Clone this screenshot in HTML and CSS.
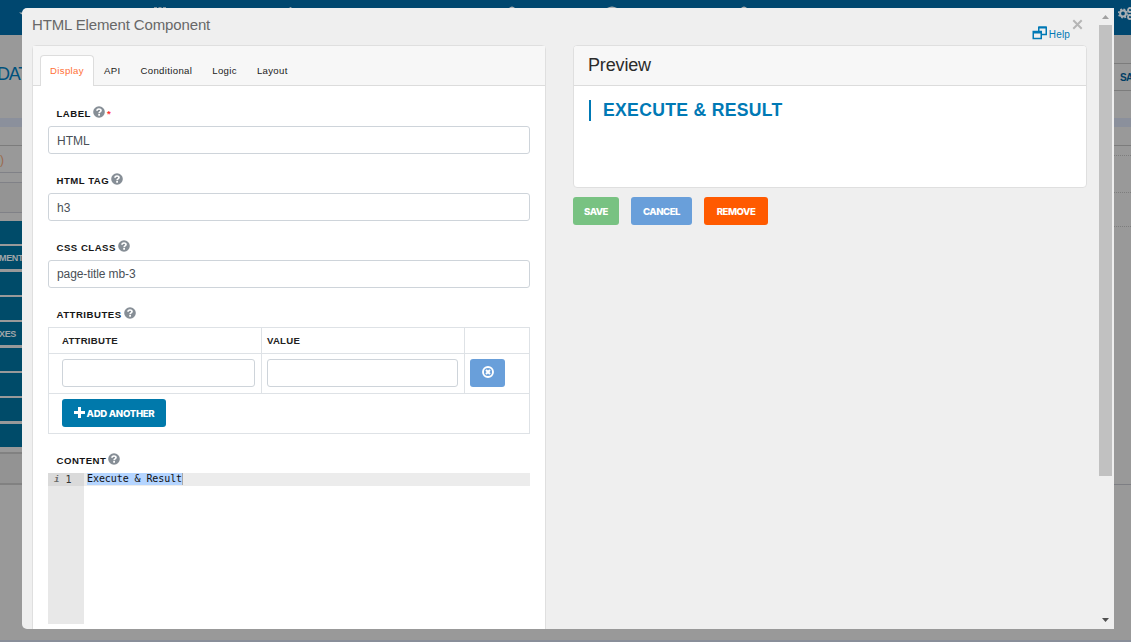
FILE: index.html
```html
<!DOCTYPE html>
<html lang="en">
<head>
<meta charset="utf-8">
<title>HTML Element Component</title>
<link rel="stylesheet" href="styles.css">
</head>
<body>
<svg class="defs" width="0" height="0" aria-hidden="true">
  <symbol id="help" viewBox="0 0 12 12"><circle cx="6" cy="6" r="5.8" fill="#868e96"/><path d="M4 4.7C4 2.5 8 2.4 8 4.6 8 5.9 6.1 5.8 6.1 7.2" fill="none" stroke="#fff" stroke-width="1.7"/><rect x="5.2" y="8" width="1.8" height="1.7" fill="#fff"/></symbol>
</svg>
<div class="page">
  <header class="topbar">
    <svg width="1131" height="35" fill="#a9afb3"><path d="M19 12.500h6v4z"/><path d="M154 7.300h3v1h-3zM158.500 7.300h3v1h-3zM163 7.300h3v1h-3zM289 8l1.500-1 1.500 1zM509 8q3-3 6 0zM607 8q5-3 10 0zM741 8q3-3 6 0z"/><g fill="none" stroke="#a9afb3"><circle cx="1123" cy="13.500" r="2.900" stroke-width="2"/><circle cx="1123" cy="13.500" r="4.300" stroke-width="1.500" stroke-dasharray="1.800 1.580"/><circle cx="1130" cy="10" r="2" stroke-width="1.800"/><circle cx="1130" cy="17" r="2" stroke-width="1.800"/></g></svg>
  </header>
  <div class="under">
    <aside class="side">
      <div class="crumb">DAT</div>
      <div class="band"></div>
      <div class="gap"></div>
      <div class="tabline"><span>)</span></div>
      <div class="search"></div>
      <div class="tiles">
        <b></b><b>MENT</b><b></b><b></b><b>XES</b><b></b><b></b><b></b><b></b>
      </div>
      <div class="group"></div>
    </aside>
    <aside class="right">
      <div class="r1"></div>
      <div class="save">SA</div>
      <div class="r2"></div>
      <div class="band"></div>
      <div class="gap"></div>
      <div class="dots d1"></div><div class="dots d2"></div><div class="dots d3"></div>
      <div class="rest"></div>
    </aside>
  </div>
  <div class="base"></div>
</div>

<main class="modal">
  <div class="content">
    <div class="head">
      <h1>HTML Element Component</h1>
      <div class="actions">
        <a class="help"><svg width="16" height="14" viewBox="0 0 16 14" fill="none" stroke="#0079b5" stroke-width="1.500"><path d="M6.750 5V1.250h7.500v7.250H10"/><path d="M6.750 1.500h7.500" stroke-width="2"/><rect x="1.250" y="5.500" width="8" height="7"/><path d="M1 6.200h8.500" stroke-width="2.500"/></svg><span>Help</span></a>
        <svg class="close" width="11" height="11" viewBox="0 0 11 11"><path d="M1.300 1.300 9.700 9.700M9.700 1.300 1.300 9.700" stroke="#b5b5b5" stroke-width="2"/></svg>
      </div>
    </div>
    <div class="columns">
      <section class="card editor">
        <nav class="tabs"><a class="active">Display</a><a>API</a><a>Conditional</a><a>Logic</a><a>Layout</a></nav>
        <div class="form">
          <div class="field"><label><span>LABEL</span><svg><use href="#help"/></svg><i>*</i></label><div class="input">HTML</div></div>
          <div class="field"><label><span>HTML TAG</span><svg><use href="#help"/></svg></label><div class="input">h3</div></div>
          <div class="field"><label><span>CSS CLASS</span><svg><use href="#help"/></svg></label><div class="input css">page-title mb-3</div></div>
          <div class="field attrs"><label><span>ATTRIBUTES</span><svg><use href="#help"/></svg></label>
            <div class="grid">
              <div class="th first">ATTRIBUTE</div><div class="th">VALUE</div><div class="th"></div>
              <div class="td first"><div class="input"></div></div><div class="td"><div class="input"></div></div>
              <div class="td"><button class="btn blue icon"><svg width="12" height="12" viewBox="0 0 12 12" fill="none" stroke="#fff"><circle cx="6" cy="6" r="5" stroke-width="1.900"/><path d="m4 4 4 4m0-4-4 4" stroke-width="2"/></svg></button></div>
              <div class="foot"><button class="btn add"><svg width="11" height="11" viewBox="0 0 11 11"><path d="M5.500 0v11M0 5.500h11" stroke="#fff" stroke-width="3"/></svg><span>ADD ANOTHER</span></button></div>
            </div>
          </div>
          <div class="field"><label><span>CONTENT</span><svg><use href="#help"/></svg></label>
            <div class="code"><div class="gutter"><div><em>i</em><span>1</span></div></div><div class="line"><mark>Execute &amp; Result</mark></div></div>
          </div>
        </div>
      </section>
      <div class="aside">
        <section class="card preview">
          <h2>Preview</h2>
          <div class="body"><h3>EXECUTE &amp; RESULT</h3></div>
        </section>
        <div class="buttons"><button class="btn green">SAVE</button><button class="btn blue cancel">CANCEL</button><button class="btn red">REMOVE</button></div>
      </div>
    </div>
  </div>
  <div class="scroll"><svg width="15" height="17"><path d="M3 11h7L6.500 7z" fill="#a0a0a0"/></svg><div class="thumb"></div><svg class="down" width="15" height="17"><path d="M3 6h7L6.500 10z" fill="#505050"/></svg></div>
</main>
</body>
</html>
```
FILE: styles.css
```css
* { box-sizing: border-box; }
body { margin: 0; font-family: "Liberation Sans", Arial, sans-serif; overflow: hidden; }
h1, h2, h3 { margin: 0; font-weight: 400; }
svg { display: block; flex: none; }
.defs { position: absolute; }
.page { height: 642px; background: #999; display: flex; flex-direction: column; overflow: hidden; }
.topbar { height: 35px; background: #00476f; flex: none; }
.under { flex: 1; display: flex; justify-content: space-between; }
.base { height: 2px; background: #898e99; }
.side { width: 22px; overflow: hidden; }
.crumb { height: 83px; padding-top: 26px; margin-left: -3px; font: 18px/26px "Liberation Sans", sans-serif; color: #00517c; letter-spacing: -1.2px; white-space: nowrap; }
.band { height: 9px; background: #8b909c; }
.gap { height: 19px; border-bottom: 1px solid #7c7c7c; }
.tabline { height: 27px; border-bottom: 1px solid #808187; font: 12px/28px "Liberation Sans", sans-serif; color: #9b6a4c; }
.search { margin-top: 9px; border: solid #808187; border-width: 1px 0; height: 31px; background: #949494; }
.tiles { padding-top: 8px; display: grid; gap: 2.350px; }
.tiles b { height: 23px; background: #004b69; color: #a0a5a8; font: bold 9px/24px "Liberation Sans", sans-serif; letter-spacing: -.35px; margin-left: -2px; padding-left: 1px; }
.group { margin-top: 5px; height: 33px; border: solid #818181; border-width: 2px 0; background: #939393; }
.right { width: 17px; overflow: hidden; }
.r1 { height: 29px; border-bottom: 1px solid #7c7c7c; }
.save { height: 27px; border-bottom: 1px solid #7c7c7c; padding-left: 6px; font: bold 10px/28px "Liberation Sans", sans-serif; letter-spacing: -.6px; color: #003e65; }
.r2 { height: 27px; }
.dots { border-bottom: 1px dotted #7d7d7d; }
.d1 { height: 10px; }
.d2 { height: 37px; }
.d3 { height: 34px; }
.rest { height: 258px; border-bottom: 1px solid #7d7e83; }

.modal { position: absolute; left: 22px; top: 8px; width: 1092px; height: 621px; background: #efefef; border-radius: 5px 0 0 5px; display: flex; overflow: hidden; }
.content { width: 1077px; padding-left: 10px; }
.head { height: 37px; display: flex; justify-content: space-between; }
h1 { font-size: 15px; line-height: 34px; color: #686868; letter-spacing: -.14px; }
.actions { display: flex; gap: 2px; padding: 11px 16px 0 0; }
.help { display: flex; gap: 1px; padding-top: 7px; color: #0079b5; font-size: 10px; line-height: 17px; letter-spacing: .15px; }
.columns { display: flex; gap: 27px; }
.card { width: 514px; background: #fff; border: 1px solid #dfdfdf; border-radius: 4px; }
.editor { height: 610px; flex: none; }
.tabs { height: 40px; background: #f7f7f7; border-bottom: 1px solid #dcdcdc; padding: 9px 0 0 7px; display: flex; font-size: 9.600px; color: #222; }
.tabs a { height: 30px; line-height: 31px; padding: 0 10px; letter-spacing: .34px; white-space: nowrap; }
.tabs .active { width: 54px; height: 31px; padding: 0 9px; line-height: 30px; color: #ff7138; background: #fff; border: 1px solid #ddd; border-bottom: 0; border-radius: 4px 4px 0 0; }
.form { padding: 16px 15px 0; }
.field { height: 67px; }
label { display: flex; align-items: center; height: 24px; padding: 0 0 1px 8.500px; font-size: 9.600px; color: #151515; font-weight: 700; letter-spacing: .5px; gap: 2px; }
label svg { width: 12px; height: 12px; margin-top: -3px; }
label i { color: #f33; font-style: normal; }
.input { height: 28px; border: 1px solid #ced4da; border-radius: 3px; background: #fff; padding-left: 8px; font-size: 12px; line-height: 28px; color: #495057; }
.css { line-height: 26px; letter-spacing: -.1px; }
.attrs { height: 146px; }
.grid { display: grid; grid-template-columns: 213px 203px 1fr; grid-template-rows: 26px 40px 40px; border: 1px solid #dee2e6; border-bottom: 0; height: 107px; }
.th, .td { border-right: 1px solid #dee2e6; border-bottom: 1px solid #dee2e6; padding: 5px; }
.td { padding-right: 6px; }
.th { font-size: 9.600px; line-height: 16px; font-weight: 700; letter-spacing: .25px; color: #222; }
.first { padding-left: 13px; }
.th:nth-child(3), .td:nth-child(6) { border-right: 0; }
.foot { grid-column: 1 / 4; padding: 5px 13px; border-bottom: 1px solid #dee2e6; }
.btn { height: 28px; padding: 1px 0 0; border: 0; border-radius: 3px; color: #fff; font: 800 9.600px/27px Inter, sans-serif; letter-spacing: -.5px; display: block; }
.blue { background: #699fda; }
.icon { width: 35px; }
.icon svg { margin: -3px auto 0 12px; }
.add { width: 104px; background: #0079ab; display: flex; align-items: center; justify-content: center; gap: 2px; letter-spacing: -.3px; }
.add svg { margin-top: -3px; }
.code { height: 151px; display: flex; font: 10px/13px "DejaVu Sans Mono", monospace; color: #111; }
.gutter { width: 36px; background: #e8e8e8; color: #333; }
.gutter div { height: 13px; display: flex; gap: 6px; padding-left: 6px; background: #dadada; }
.gutter em { font: italic bold 9px/14px "Liberation Mono", monospace; color: #666; }
.line { height: 13px; flex: 1; padding-left: 3px; line-height: 11px; background: #ececec; }
mark { display: inline-block; height: 12px; background: #b5d5ff; border-right: 1px solid #aaa; letter-spacing: -.08px; color: #111; }
.aside { width: 514px; }
.preview { height: 143px; overflow: hidden; }
h2 { height: 40px; padding-left: 14px; line-height: 38px; font-size: 18px; letter-spacing: -.15px; color: #2b2b2b; background: #f7f7f7; border-bottom: 1px solid #dcdcdc; }
.body { padding: 14px 15px; }
h3 { height: 21px; padding-left: 12px; border-left: 2px solid #0079b5; color: #0079b5; font-size: 17.600px; letter-spacing: .31px; line-height: 20px; font-weight: 700; }
.buttons { display: flex; gap: 12px; padding-top: 9px; }
.green { width: 46px; background: #78c282; }
.cancel { width: 61px; }
.red { width: 64px; background: #ff5a00; }
.scroll { width: 15px; }
.thumb { width: 13px; height: 451px; background: #c1c1c1; }
.down { margin-top: 136px; }
```
